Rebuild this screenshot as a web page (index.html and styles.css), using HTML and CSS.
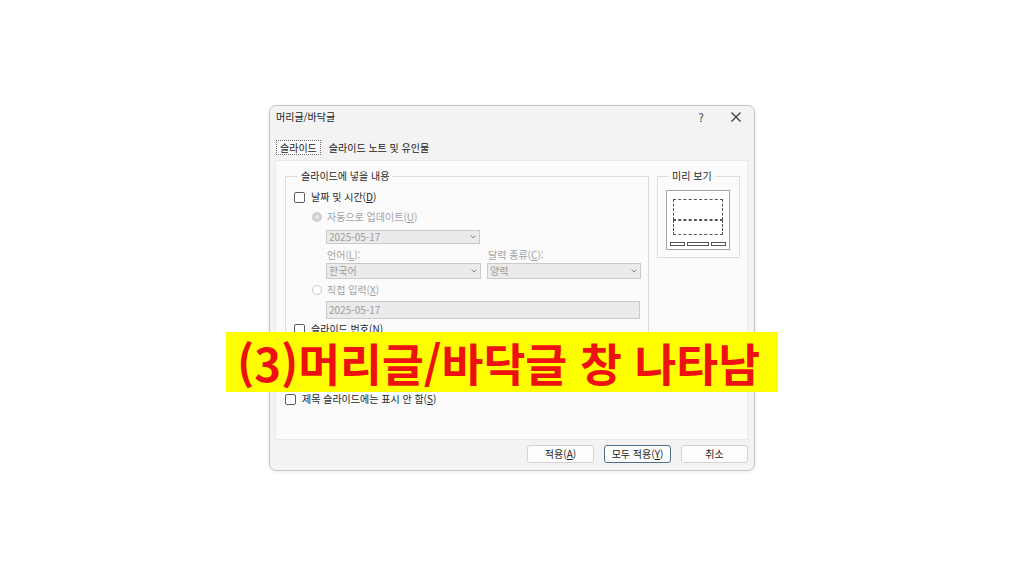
FILE: index.html
```html
<!DOCTYPE html>
<html lang="ko">
<head>
<meta charset="utf-8">
<title>머리글/바닥글</title>
<link rel="stylesheet" href="styles.css">
</head>
<body>
<div class="stage">
  <div class="dialog">
    <div class="titlebar">
      <span class="title">머리글/바닥글</span>
      <span class="help">?</span>
      <span class="close"><svg width="10" height="10" viewBox="0 0 10 10"><path d="M0.5 0.5 L9.5 9.5 M9.5 0.5 L0.5 9.5" stroke="#333" stroke-width="1.1" fill="none"/></svg></span>
    </div>
    <div class="tabs">
      <span class="tab active">슬라이드</span>
      <span class="tab">슬라이드 노트 및 유인물</span>
    </div>
    <div class="panel">
      <div class="top">
        <fieldset class="group main">
          <legend>슬라이드에 넣을 내용</legend>
          <div class="row r-date"><span class="cb"></span><span class="lbl">날짜 및 시간(<u>D</u>)</span></div>
          <div class="row r-auto ind1 dis"><span class="rb on"></span><span class="lbl">자동으로 업데이트(<u>U</u>)</span></div>
          <div class="combo c-date ind2"><span>2025-05-17</span><svg class="arr" width="6" height="4" viewBox="0 0 6 4"><path d="M0.5 0.5 L3 3 L5.5 0.5" stroke="#888" fill="none"/></svg></div>
          <div class="pair labels ind2 dis"><span class="plbl a">언어(<u>L</u>):</span><span class="plbl">달력 종류(<u>C</u>):</span></div>
          <div class="pair combos ind2">
            <div class="combo c-lang"><span>한국어</span><svg class="arr" width="6" height="4" viewBox="0 0 6 4"><path d="M0.5 0.5 L3 3 L5.5 0.5" stroke="#888" fill="none"/></svg></div>
            <div class="combo c-cal"><span>양력</span><svg class="arr" width="6" height="4" viewBox="0 0 6 4"><path d="M0.5 0.5 L3 3 L5.5 0.5" stroke="#888" fill="none"/></svg></div>
          </div>
          <div class="row r-fixed ind1 dis"><span class="rb"></span><span class="lbl">직접 입력(<u>X</u>)</span></div>
          <div class="field f-fixed ind2">2025-05-17</div>
          <div class="row r-num"><span class="cb"></span><span class="lbl">슬라이드 번호(<u>N</u>)</span></div>
          <div class="row r-foot"><span class="cb"></span></div>
          <div class="field f-foot ind2"></div>
        </fieldset>
        <fieldset class="group preview">
          <legend>미리 보기</legend>
          <div class="thumb">
            <div class="dash d1"></div>
            <div class="dash d2"></div>
            <div class="bars"><span class="bar b1"></span><span class="bar b2"></span><span class="bar b3"></span></div>
          </div>
        </fieldset>
      </div>
      <div class="row r-title"><span class="cb"></span><span class="lbl">제목 슬라이드에는 표시 안 함(<u>S</u>)</span></div>
    </div>
    <div class="buttons">
      <span class="btn">적용(<u>A</u>)</span>
      <span class="btn focus">모두 적용(<u>Y</u>)</span>
      <span class="btn">취소</span>
    </div>
  </div>
</div>
<div class="banner">(3)머리글/바닥글 창 나타남</div>
</body>
</html>
```
FILE: styles.css
```css
html, body {
  margin: 0;
  padding: 0;
  background: #ffffff;
}
body {
  width: 1024px;
  height: 576px;
  overflow: hidden;
  position: relative;
  font-family: "Noto Sans CJK KR", "Noto Sans", sans-serif;
  font-size: 10px;
  color: #1f1f1f;
}
.stage {
  padding: 105px 0 0 269px;
}
.dialog {
  width: 484px;
  height: 364px;
  border: 1px solid #c6c6c6;
  border-radius: 7px;
  background: #f3f3f3;
  box-shadow: 0 1px 4px rgba(0,0,0,0.08);
  display: flex;
  flex-direction: column;
}
.titlebar {
  height: 22px;
  display: flex;
  align-items: center;
  padding-left: 6px;
  line-height: 22px;
}
.title {
  flex: 1;
  color: #1a1a1a;
}
.help {
  width: 34px;
  text-align: center;
  font-size: 11px;
  color: #333;
}
.close {
  width: 36px;
  display: flex;
  justify-content: center;
  align-items: center;
}
.tabs {
  margin-top: 12px;
  padding-left: 6px;
  display: flex;
  gap: 7px;
  height: 15px;
}
.tab {
  line-height: 13px;
  height: 13px;
  border: 1px solid transparent;
  color: #1a1a1a;
}
.tab.active {
  border: 1px dotted #6a6a6a;
  padding: 0 3px;
  background: #fafafa;
}
.panel {
  margin: 5px 0 0 5px;
  width: 462px;
  height: 278px;
  background: #fbfbfb;
  border: 1px solid #e9e9e9;
  padding-left: 9px;
  box-sizing: content-box;
}
.top {
  display: flex;
  align-items: flex-start;
  gap: 8px;
  margin-top: 8px;
}
.group {
  margin: 0;
  border: 1px solid #dddddd;
  padding: 0;
  min-width: 0;
}
.group legend {
  line-height: 14px;
  padding: 0 3px;
  margin-left: 4px;
  color: #1f1f1f;
}
.main {
  padding: 7px 0 6px 8px;
  box-sizing: border-box;
  width: 364px;
  display: flex;
  flex-direction: column;
}
.row {
  height: 14px;
  display: flex;
  align-items: center;
  line-height: 14px;
}
.ind1 { margin-left: 18px; }
.ind2 { margin-left: 32px; }
.dis { color: #a3a3a3; }
.cb {
  width: 9px;
  height: 9px;
  border: 1px solid #5c5c5c;
  border-radius: 2px;
  background: #ffffff;
  margin-right: 6px;
  flex: none;
}
.rb {
  width: 8px;
  height: 8px;
  border: 1px solid #c9c9c9;
  border-radius: 50%;
  background: #ffffff;
  margin-right: 5px;
  flex: none;
}
.rb.on {
  width: 4px;
  height: 4px;
  border: 3px solid #cfcfcf;
  background: #e9e9e9;
}
.r-auto { margin-top: 6px; }
.combo {
  height: 14px;
  box-sizing: border-box;
  border: 1px solid #cacaca;
  background: #ebebeb;
  color: #9c9c9c;
  display: flex;
  align-items: center;
  justify-content: space-between;
  padding: 0 3px 0 2px;
  line-height: 12px;
}
.c-date {
  width: 154px;
  margin-top: 6px;
}
.arr { flex: none; }
.pair {
  display: flex;
}
.labels {
  margin-top: 4px;
  height: 14px;
  line-height: 14px;
}
.plbl { padding-left: 1px; }
.plbl.a { width: 160px; }
.combos {
  margin-top: 1px;
  gap: 6px;
}
.combos .combo {
  height: 16px;
  width: 155px;
}
.combos .c-cal { width: 154px; }
.r-fixed { margin-top: 4px; }
.field {
  height: 18px;
  width: 314px;
  box-sizing: border-box;
  border: 1px solid #cacaca;
  background: #ebebeb;
  color: #9c9c9c;
  line-height: 16px;
  padding-left: 2px;
}
.f-fixed { margin-top: 4px; }
.r-num { margin-top: 3px; }
.r-foot { margin-top: 7px; }
.f-foot { margin-top: 4px; background: #ffffff; }
.preview {
  width: 83px;
  height: 89px;
  box-sizing: border-box;
  padding: 7px 0 0 8px;
}
.preview legend {
  margin-left: 3px;
}
.thumb {
  border: 1px solid #a6a6a6;
  background: #ffffff;
  display: flex;
  flex-direction: column;
  align-items: flex-start;
  padding: 8px 0 0 6px;
  box-sizing: content-box;
  width: 56px;
  height: 50px;
}
.dash {
  width: 48px;
  border: 1px dashed #555;
  box-sizing: content-box;
}
.d1 { height: 19px; }
.d2 { height: 13px; }
.bars {
  display: flex;
  gap: 2px;
  margin: 7px 0 0 -3px;
}
.bar {
  height: 2px;
  border: 1px solid #555;
  background: #fff;
}
.b1 { width: 13px; }
.b2 { width: 20px; }
.b3 { width: 13px; }
.r-title {
  margin-top: 6px;
}
.buttons {
  display: flex;
  justify-content: flex-end;
  gap: 10px;
  margin-top: 5px;
  padding-right: 6px;
}
.btn {
  width: 67px;
  height: 18px;
  box-sizing: border-box;
  border: 1px solid #d3d3d3;
  border-radius: 3px;
  background: #fdfdfd;
  text-align: center;
  line-height: 16px;
  color: #1a1a1a;
}
.btn.focus {
  border-color: #4f6f8f;
}
.banner {
  position: absolute;
  left: 226px;
  top: 332px;
  width: 552px;
  height: 60px;
  box-sizing: border-box;
  padding-left: 11px;
  background: #ffff00;
  color: #ee1111;
  font-family: "Noto Sans CJK KR", sans-serif;
  font-weight: 700;
  font-size: 45.5px;
  line-height: 60px;
  white-space: nowrap;
}
```
